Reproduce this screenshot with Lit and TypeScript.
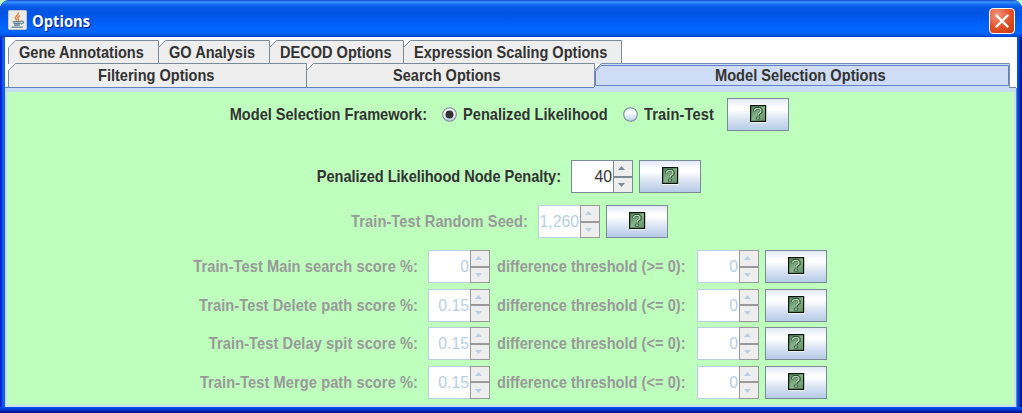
import { LitElement, html, svg, css } from 'lit';
import { customElement, property } from 'lit/decorators.js';
import { classMap } from 'lit/directives/class-map.js';

interface Tab {
  label: string;
  width: number;
  pad: number;
}

interface ScoreRow {
  label: string;
  value: string;
  sign: string;
}

const TOP_TABS: Tab[] = [
  { label: 'Gene Annotations', width: 150, pad: 11 },
  { label: 'GO Analysis', width: 111, pad: 11 },
  { label: 'DECOD Options', width: 134, pad: 11 },
  { label: 'Expression Scaling Options', width: 218, pad: 11 },
];

const BOTTOM_TABS: Tab[] = [
  { label: 'Filtering Options', width: 298, pad: 90 },
  { label: 'Search Options', width: 288, pad: 87 },
];

const SCORES: ScoreRow[] = [
  { label: 'Train-Test Main search score %:', value: '0', sign: '>=' },
  { label: 'Train-Test Delete path score %:', value: '0.15', sign: '<=' },
  { label: 'Train-Test Delay spit score %:', value: '0.15', sign: '<=' },
  { label: 'Train-Test Merge path score %:', value: '0.15', sign: '<=' },
];

@customElement('metal-tab')
class MetalTab extends LitElement {
  @property() label = '';
  @property({ type: Number }) width = 100;
  @property({ type: Number }) pad = 11;

  static styles = css`
    :host {
      display: block;
      flex: none;
    }

    .tab {
      display: grid;
      height: 24px;
    }

    .shape,
    .label {
      grid-area: 1 / 1;
    }

    .shape {
      display: block;
      overflow: visible;
    }

    .label {
      justify-self: start;
      padding-top: 2px;
      line-height: 21px;
      white-space: nowrap;
      color: #333;
      transform: scaleX(0.928);
      transform-origin: left;
    }
  `;

  render() {
    const w = this.width;
    return html`
      <div class="tab" style="width:${w}px">
        <svg class="shape" width=${w} height="24">
          <path d="M0.5 24V7.5L7.5 0.5H${w + 0.5}V24" fill="#eee" stroke="#7a8a99" />
        </svg>
        <span class="label" style="margin-left:${this.pad}px">${this.label}</span>
      </div>
    `;
  }
}

@customElement('help-button')
class HelpButton extends LitElement {
  static styles = css`
    :host {
      display: block;
      flex: none;
    }

    .button {
      box-sizing: border-box;
      display: flex;
      align-items: center;
      justify-content: center;
      width: 62px;
      height: 33px;
      padding: 0 0 1px 1px;
      border: 1px solid #7a8a99;
      background: linear-gradient(#e2eaf6 0%, #fff 28%, #fff 34%, #d9e3f3 65%, #b8cde8 97%);
    }
  `;

  render() {
    return html`
      <button class="button">
        <svg width="17" height="18" viewBox="0 0 17 18">
          <defs>
            <linearGradient id="g" x1="0" y1="0" x2="1" y2="1">
              <stop offset="0" stop-color="#4b8050" />
              <stop offset="0.5" stop-color="#86b58a" />
              <stop offset="1" stop-color="#5c8c60" />
            </linearGradient>
          </defs>
          <rect x="1" y="1" width="16" height="17" fill="#f4f2ec" />
          <rect x="0.6" y="0.6" width="15" height="15.8" fill="url(#g)" stroke="#101510" stroke-width="1.2" />
          <path d="M4.8 6.2V4.8L6.2 3.5H9.8L11.2 4.8V7L8.4 9.2V11" fill="none" stroke="#2c4a30" stroke-width="2.8" />
          <path d="M4.8 6V4.8L6.2 3.6H9.6L10.8 4.8V7L8 9.2V10.8" fill="none" stroke="#b9d9b8" stroke-width="1.4" />
          <path d="M6.4 12h3.2v2.2H6.4z" fill="#b9d9b8" stroke="#2c4a30" stroke-width="0.8" />
        </svg>
      </button>
    `;
  }
}

@customElement('metal-spinner')
class MetalSpinner extends LitElement {
  @property() value = '0';
  @property({ type: Boolean }) disabled = false;

  static styles = css`
    :host {
      display: block;
      flex: none;
    }

    .spinner {
      box-sizing: border-box;
      display: flex;
      width: 62px;
      height: 33px;
      color: #333;
      --edge: #7a8a99;
      --field: #7a8a99;
      --arrow: #7a8a99;
    }

    .disabled {
      color: #b8cfe5;
      --edge: #999;
      --field: #b8cfe5;
      --arrow: #b8cfe5;
    }

    .field {
      box-sizing: border-box;
      width: 42px;
      border: 1px solid var(--field);
      border-right: 0;
      background: #fff;
      padding-right: 1px;
      text-align: right;
      font-size: 15.8px;
      font-weight: normal;
      line-height: 32px;
      overflow: hidden;
      white-space: nowrap;
    }

    .steps {
      box-sizing: border-box;
      display: flex;
      flex-direction: column;
      width: 20px;
      border: 1px solid var(--edge);
      background: #eee;
    }

    .step {
      display: flex;
      flex: 1;
      align-items: center;
      justify-content: center;
      padding-right: 3px;
    }

    .step + .step {
      border-top: 2px solid var(--edge);
    }

    .arrow {
      fill: var(--arrow);
    }
  `;

  render() {
    return html`
      <div class=${classMap({ spinner: true, disabled: this.disabled })}>
        <div class="field">${this.value}</div>
        <div class="steps">
          <div class="step">
            <svg class="arrow" width="7" height="4"><path d="M0 4L3.5 0L7 4z" /></svg>
          </div>
          <div class="step">
            <svg class="arrow" width="7" height="4"><path d="M0 0L3.5 4L7 0z" /></svg>
          </div>
        </div>
      </div>
    `;
  }
}

@customElement('metal-radio')
class MetalRadio extends LitElement {
  @property({ type: Boolean }) checked = false;

  static styles = css`
    :host {
      display: block;
      flex: none;
    }

    .dot {
      display: block;
    }
  `;

  render() {
    return html`
      <svg class="dot" width="15" height="15" viewBox="0 0 15 15">
        <defs>
          <linearGradient id="r" x1="0" y1="0" x2="0" y2="1">
            <stop offset="0" stop-color="#e3ebf6" />
            <stop offset="0.35" stop-color="#fff" />
            <stop offset="1" stop-color="#b8cde8" />
          </linearGradient>
        </defs>
        <circle cx="7.5" cy="7.5" r="6.8" fill="url(#r)" stroke="#7a8a99" stroke-width="1.1" />
        ${this.checked ? svg`<circle cx="7.5" cy="7.5" r="4" fill="#333" />` : ''}
      </svg>
    `;
  }
}

@customElement('app-root')
class AppRoot extends LitElement {
  static styles = css`
    :host {
      display: block;
      width: 1022px;
      height: 413px;
      overflow: hidden;
      background: #beffbe;
      font-family: 'Liberation Sans', Arial, sans-serif;
      font-size: 15.7px;
      font-weight: bold;
      color: #333;
    }

    .window {
      box-sizing: border-box;
      display: flex;
      flex-direction: column;
      height: 413px;
      padding: 0 5px 6px;
      border-radius: 9px 9px 0 0;
      background:
        linear-gradient(#0a4ff0, #0038d8 45%, #001a9c 75%, #00138c) bottom / 100% 6px no-repeat,
        linear-gradient(90deg, #0019cf, #0831d9 30%, #166aee 65%, #0855dd) left / 5px 100% no-repeat,
        linear-gradient(270deg, #00138c, #001ea0 25%, #0441d8 60%, #0855dd) right / 5px 100% no-repeat,
        #0855dd;
    }

    .titlebar {
      box-sizing: border-box;
      display: flex;
      align-items: center;
      flex: none;
      height: 37px;
      margin: 0 -5px;
      padding: 4px 7px 0 8px;
      border-radius: 9px 9px 0 0;
      background: linear-gradient(#0a46c8 0, #3d95ff 2px, #1a72f5 4px, #0558e4 7px, #0054e3 14px, #005cf2 21px, #0066ff 28px, #0066fe 33px, #0049d4 36px, #003fc4 37px);
    }

    .title {
      flex: 1;
      margin-left: 5px;
      color: #fff;
      font-family: 'Open Sans', 'Noto Sans', sans-serif;
      font-size: 15.5px;
      line-height: 20px;
      text-shadow: 1px 1px 1px #0a1883;
      transform: scaleX(0.95);
      transform-origin: left;
    }

    .java {
      flex: none;
      margin-bottom: 2px;
    }

    .close {
      box-sizing: border-box;
      flex: none;
      width: 26px;
      height: 26px;
      padding: 0;
      border: 1px solid #fff;
      border-radius: 4px;
      background: radial-gradient(circle at 30% 25%, #f0977c, #e2532c 50%, #c93a10);
    }

    .cross {
      display: block;
    }

    .pane {
      box-sizing: border-box;
      display: flex;
      flex-direction: column;
      flex: 1;
      background: #fff;
      padding-top: 3px;
    }

    .tabs {
      display: flex;
      flex: none;
      padding-left: 3px;
    }

    .upper {
      height: 23px;
    }

    .lower {
      height: 25px;
      background: linear-gradient(#6382bf, #6382bf) bottom left / 1011px 1px no-repeat;
    }

    .selected {
      display: grid;
      flex: none;
      width: 416px;
    }

    .selected-shape,
    .selected-label {
      grid-area: 1 / 1;
    }

    .selected-shape {
      display: block;
      overflow: visible;
    }

    .selected-label {
      justify-self: start;
      margin-left: 121px;
      padding-top: 2px;
      line-height: 21px;
      white-space: nowrap;
      transform: scaleX(0.932);
      transform-origin: left;
    }

    .panel {
      box-sizing: border-box;
      flex: 1;
      margin-right: 1px;
      border: solid #c8ddf2;
      border-width: 4px 2px 2px;
      background: #beffbe;
      box-shadow: 1px 0 0 #6382bf;
    }

    .row {
      display: flex;
      align-items: center;
      height: 33px;
      margin-left: -1px;
      white-space: nowrap;
    }

    .framework {
      padding-top: 6px;
    }

    .penalty {
      padding-top: 29px;
    }

    .seed {
      padding-top: 12px;
    }

    .name,
    .choice,
    .threshold {
      flex: none;
      line-height: 20px;
      padding-top: 1px;
      transform: scaleX(0.932);
    }

    .name {
      text-align: right;
      transform-origin: right;
    }

    .choice,
    .threshold {
      transform-origin: left;
    }

    .framework-name {
      width: 421px;
      letter-spacing: -0.04px;
    }

    .penalty-name {
      width: 555px;
      letter-spacing: -0.06px;
    }

    .seed-name {
      width: 522px;
      letter-spacing: 0.08px;
    }

    .score-name {
      width: 412px;
      letter-spacing: 0.08px;
    }

    .dim {
      color: #999;
    }

    .radio {
      margin: 0 6px 0 15px;
    }

    .choice {
      width: 145px;
    }

    .short {
      width: 70px;
      letter-spacing: 0.12px;
    }

    .spin {
      margin-left: 10px;
    }

    .help {
      margin-left: 6px;
    }

    .framework .help {
      margin-left: 13px;
    }

    .scores {
      display: grid;
      row-gap: 5.6px;
      padding-top: 12px;
    }

    .threshold {
      width: 190px;
      margin-left: 7px;
    }
  `;

  renderTitle() {
    return html`
      <div class="titlebar">
        <svg class="java" width="19" height="20" viewBox="0 0 19 20">
          <rect x="0.5" y="0.5" width="18" height="19" rx="1" fill="#eceae4" stroke="#c4c8cf" />
          <path d="M10.4 2.5C11 5 7 6 7.4 8C7.6 9 8.6 9.6 8.8 10.6M12 5.6C9.6 6.8 9.4 8 10.4 9C10.8 9.6 10.4 10.2 10 10.6" fill="none" stroke="#e8803c" stroke-width="1.5" />
          <path d="M4.6 11.7h8.6M5.4 13.4h7.4M6 15h5.8M3.4 17.2h11.4" fill="none" stroke="#6286a0" stroke-width="1.3" />
          <path d="M13 11.2C16.6 10.8 16.4 13.6 12.8 14.2" fill="none" stroke="#6286a0" stroke-width="1.2" />
        </svg>
        <span class="title">Options</span>
        <button class="close">
          <svg class="cross" width="24" height="24">
            <path d="M6.5 6.5l11 11M17.5 6.5l-11 11" stroke="#fff" stroke-width="2.4" stroke-linecap="round" />
          </svg>
        </button>
      </div>
    `;
  }

  renderTab(tab: Tab) {
    return html`<metal-tab .label=${tab.label} .width=${tab.width} .pad=${tab.pad}></metal-tab>`;
  }

  render() {
    return html`
      <div class="window">
        ${this.renderTitle()}
        <div class="pane">
          <div class="tabs upper">${TOP_TABS.map((tab) => this.renderTab(tab))}</div>
          <div class="tabs lower">
            ${BOTTOM_TABS.map((tab) => this.renderTab(tab))}
            <div class="selected">
              <svg class="selected-shape" width="416" height="25">
                <path d="M0 25V7L7 0H415V25z" fill="#c8ddf2" />
                <path d="M0.5 24V7.5L7.5 0.5H415.5V25" fill="none" stroke="#7a8fb5" />
                <path d="M1.5 22.5V8L7 2.5H414.5V22.5z" fill="#cfdcf5" stroke="#6382bf" />
              </svg>
              <span class="selected-label">Model Selection Options</span>
            </div>
          </div>
          <div class="panel">
            <div class="row framework">
              <span class="name framework-name">Model Selection Framework:</span>
              <metal-radio class="radio" checked></metal-radio>
              <span class="choice">Penalized Likelihood</span>
              <metal-radio class="radio"></metal-radio>
              <span class="choice short">Train-Test</span>
              <help-button class="help"></help-button>
            </div>
            <div class="row penalty">
              <span class="name penalty-name">Penalized Likelihood Node Penalty:</span>
              <metal-spinner class="spin" value="40"></metal-spinner>
              <help-button class="help"></help-button>
            </div>
            <div class="row seed">
              <span class="name seed-name dim">Train-Test Random Seed:</span>
              <metal-spinner class="spin" value="1,260" disabled></metal-spinner>
              <help-button class="help"></help-button>
            </div>
            <div class="scores">
              ${SCORES.map((score) => html`
                <div class="row">
                  <span class="name score-name dim">${score.label}</span>
                  <metal-spinner class="spin" .value=${score.value} disabled></metal-spinner>
                  <span class="threshold dim">difference threshold (${score.sign} 0):</span>
                  <metal-spinner class="spin" value="0" disabled></metal-spinner>
                  <help-button class="help"></help-button>
                </div>
              `)}
            </div>
          </div>
        </div>
      </div>
    `;
  }
}
